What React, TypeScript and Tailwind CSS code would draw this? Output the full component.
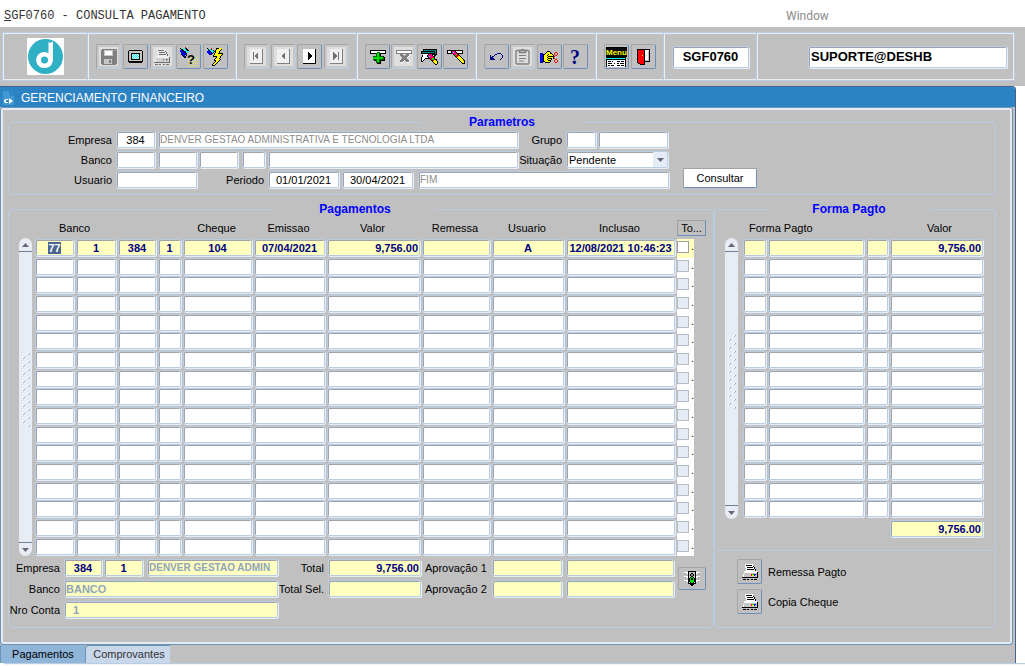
import { useEffect, useRef, type ReactNode } from "react";
import clsx from "clsx";

const FIELD =
  "block h-[17px] min-w-0 rounded-[2px] border border-[#b8cce4] px-px outline-none shadow-[inset_1px_1px_0_#a0a4aa,1px_1px_0_#e8eef6]";

type FieldProps = {
  label: string;
  value?: string;
  id?: string;
  small?: boolean;
  className?: string;
};

function Field({ label, value = "", id, small, className }: FieldProps) {
  return (
    <input
      id={id}
      type="text"
      aria-label={label}
      defaultValue={value}
      className={clsx(FIELD, small ? "text-[10px]" : "text-[11px]", "leading-[15px]", className)}
    />
  );
}

// ---------------------------------------------------------------- icons

const COLORS: Record<string, string> = {
  K: "#000000",
  W: "#ffffff",
  S: "#c6c6c6",
  G: "#808080",
  R: "#ff0000",
  L: "#00e000",
  B: "#0000ff",
  Y: "#ffff00",
  N: "#000080",
  C: "#00ffff",
  M: "#e6007e",
  O: "#808000",
  D: "#006000",
  T: "#008080",
};

function Pixels({ rows, gray }: { rows: string[]; gray?: boolean }) {
  return (
    <svg
      width={rows[0].length}
      height={rows.length}
      shapeRendering="crispEdges"
      aria-hidden="true"
      className={clsx("shrink-0", gray && "opacity-50 grayscale")}
    >
      {rows.flatMap((row, y) =>
        [...row].map((c, x) =>
          c === "." ? null : (
            <rect key={`${x}-${y}`} x={x} y={y} width="1" height="1" fill={COLORS[c]} />
          )
        )
      )}
    </svg>
  );
}

const PRINTER = [
  "...WWWWWWWW.....",
  "...WKKKKKKW.....",
  "...WWWWWWWWK....",
  "...WWKKKKKKWK...",
  "....WWWWWWWWK...",
  "....WKKKKKKKWK..",
  "....WWWWWWWWWK..",
  "..WWWWWWWWWWWWW.",
  "..WWWWWWWWWWWWWK",
  "..SSSSSSSSSSSSSK",
  ".WSSSSSSSRLLBBSK",
  ".WSSSSSSSRYYBSSK",
  ".WSSSSSSSSSSSSSK",
  "KKKKKKKKKKKKKKKK",
  "................",
  ".KKK.KK..KK.KKK.",
];

const SAVE = [
  ".GGGGGGGGGGGGGGG",
  "GGGSSSSSSSSSGGSG",
  "GGGSWWWWWWWSGGGG",
  "GGGSWWWWWWWSGGGG",
  "GGGSWWWWWWWSGGGG",
  "GGGSWWWWWWWSGGGG",
  "GGGSSSSSSSSSGGGG",
  "GGGGGGGGGGGGGGGG",
  "GGGGGGGGGGGGGGGG",
  "GGGGGGGGGGGGGGGG",
  "GGGSSSSSSSSGGGGG",
  "GGGSSSSSGGSGGGGG",
  "GGGSSSSSGGSGGGGG",
  "GGGSSSSSGGSGGGGG",
  "GGGSSSSSSSSGGGGG",
  ".GGGGGGGGGGGGGG.",
];

const SCREEN = [
  ".KKKKKKKKKKKKK.",
  "KSSSSSSSSSSSSSK",
  "KSSSSSSSSSSSSSK",
  "KSSKKKKKKKKKSSK",
  "KSSKCWCWCWCKSSK",
  "KSSKWCWCWCWKSSK",
  "KSSKCWCWCWCKSSK",
  "KSSKWCWCWCWKSSK",
  "KSSKCWCWCWCKSSK",
  "KSSKKKKKKKKKSSK",
  "KSSSSSSSSSSSSSK",
  "KKKKKKKKKKKKKKK",
  ".KKKKKKKKKKKKK.",
];

const BOLT = [
  "K...R....KKKYYY..",
  ".KCCK....KYYYYK..",
  ".BKCCCK.KYYYYK...",
  "BBBKCCCKKYYYK....",
  "BBBBKCK.KYYYK....",
  ".BBBBK.KYYYKKKKK.",
  "..BBK..KYYYYYYYK.",
  "......KYYYYYYYK..",
  "......KKKKYYYK...",
  ".........KYYYK...",
  "........KYYYK....",
  ".......KYYYYYK...",
  ".......KKYYYK....",
  "........KYYK.....",
  ".......KYYK......",
  "......KYYK.......",
  ".....KYYK........",
  ".....KKK.........",
];

const ADD = [
  "KKKKKKKKKKKKKKKK",
  "KWWWWWWWWWWWWWWK",
  "KWWWWWWDDDWWWWWK",
  "KKKKKKDLLDKKKKKK",
  "......DLLDK.....",
  "......DLLDK.....",
  "...DDDDLLDDDDK..",
  "...LLLLLLLLLLDK.",
  "...LLLLLLLLLLDK.",
  "...DDDDLLDDDDDK.",
  "....KKDLLDKKKKK.",
  "......DLLDK.....",
  "......DDDDK.....",
  ".......KKKK.....",
];

const REMOVE = [
  "GGGGGGGGGGGGGGGG",
  "GWWWWWWWWWWWWWWG",
  "GWWWWWWWWWWWWWWG",
  "GGGGGGGGGGGGGGGG",
  "....GGG...GGG...",
  "....GGGG.GGGGW..",
  ".....GGGGGGGW...",
  "......GGGGGW....",
  "......GGGGG.....",
  ".....GGGGGGG....",
  "....GGGGWGGGG...",
  "....GGGW..GGGW..",
  ".....WW....WW...",
];

const CLEAR_FORM = [
  "..KKKKKKKKKKKKKK.",
  "..KTTTTTTTTTTTTK.",
  "KKKKKKKKKKKKKKTK.",
  "KTTTTTTTTTTTTKTK.",
  "KKKKKKKKKKKKKKTK.",
  "..WWWWWKMMMKKKKK.",
  ".KWWWWKMMMMKWKK..",
  ".KWWWWKMCMMMKK...",
  "KWWWWWWKMMMRRK...",
  "KWWWKKKKKMRLLK...",
  "KWWK.....KRLLRKK.",
  "KWK.......KKRYYK.",
  "KK.........KYYYYK",
  "............KYYYK",
  ".............KYYK",
  "..............KK.",
];

const CLEAR_RECORD = [
  "KKKKKKKKKKKKKKKK..",
  "KWWWKMMMKWWWWWWK..",
  "KWWWKMCMMKWWWWWK..",
  "KKKKKMMMMMKKKKKK..",
  "......KMMLRK......",
  ".......KLRRRK.....",
  "........KRRYYK....",
  ".........KYYYYK...",
  "..........KYYYYK..",
  "...........KYYYYK.",
  "............KYYYOK",
  ".............KYYYK",
  "..............KYYK",
  "...............KKK",
];

const UNDO = [
  ".......NNNN..",
  ".....NN....N.",
  "N...N.......N",
  "N.NN........N",
  "NNN.........N",
  "NNNN.......N.",
  "NNNNN.....N..",
];

const HAND = [
  ".......KKK........",
  "......KYYYK....RR.",
  "BBK..KYYYYKK..R..R",
  "BBBKKYYYKYYYK.R..R",
  "BBBKYYYKYYYYYK.RR.",
  "BBBKYYYYKKKKKKR...",
  "BBBKYYYKYYYYYK....",
  "BBBKYYYYKKKK.KR...",
  "BBBKYYYKYYYK...RR.",
  "BBBKYYYYKKK...R..R",
  "BBBKKYYYYYK...R..R",
  "BBK..KKKKK.....RR.",
];

const DOOR = [
  "KKKKKKKKKKKKK",
  "KRRRRRRKWWWWK",
  "KRRRRRRKWWWSK",
  "KRRRRRRKWWWSK",
  "KRRRRRRKWWWSK",
  "KRRRRRRKWWWSK",
  "KRRRRYRKWWWSK",
  "KRRRRRRKWWWSK",
  "KRRRRRRKWWWSK",
  "KRRRRRRKWWWSK",
  "KRRRRRRKWWWSK",
  "KRRRRRRKSSSSK",
  "KRRRRRRKKKKKK",
  "KRRRRRRK.....",
  ".KKRRRRK.....",
  "...KKKKK.....",
];

const TRAFFIC = [
  "....KKKKKKKK....",
  "WWWWKSSSSSSKWWWW",
  ".GWWKSSKKSSKWWG.",
  "....KSKGGKSK....",
  "....KSKGGKSK....",
  "WWWWKSSKKSSKWWWW",
  ".GWWKSKLLKSKWWG.",
  "....KKLKKLKK....",
  "....KKLKKLKK....",
  "WWWWKKLLLLKKWWWW",
  ".GWWKKLLLLKKWWG.",
  "....KSKLLKSK....",
  "....KKKKKKKK....",
  "......KKKK......",
  ".......KK.......",
];

const CLIPBOARD = (
  <svg width="15" height="17" fill="none" stroke="#808080" strokeWidth="1.4" aria-hidden="true">
    <rect x="1" y="2.5" width="13" height="13.5" rx="1" />
    <path d="M4.5 4.5V2.5h2a1 1 0 0 1 2 0h2v2z" fill="#e0e0e0" />
    <path d="M4 7.5h7M4 10.5h7M4 13h5" strokeWidth="1" />
  </svg>
);

const QUERY = (
  <svg width="18" height="20" shapeRendering="crispEdges" aria-hidden="true">
    <path d="M0 3l1 4 4 3 2-6z" fill="#0000ff" />
    <path d="M2 1l5 5 3-2-4-3z" fill="#00ffff" />
    <path d="M0 1l7 6M5 1l4 3M1 7l4 4 2-4" stroke="#000000" fill="none" />
    <rect x="5" y="0" width="1" height="2" fill="#ff0000" />
    <path
      d="M8 10.5h10M9 12.5h9M8 14.5h10M9 16.5h9M8 18.5h10"
      stroke="#f0e850"
      strokeDasharray="1 1"
    />
    <text x="7" y="17" className="font-['Liberation_Sans'] text-[13px] font-bold">
      ?
    </text>
  </svg>
);

const HELP = (
  <svg width="14" height="20" aria-hidden="true">
    <text
      x="2"
      y="17"
      fill="#000080"
      className="font-['Liberation_Serif'] text-[20px] font-bold"
    >
      ?
    </text>
  </svg>
);

const MENU = (
  <svg width="21" height="20" shapeRendering="crispEdges" aria-hidden="true">
    <rect width="21" height="10" fill="#000000" />
    <text x="0" y="8" fill="#ffff00" className="font-['Liberation_Sans'] text-[8px] font-bold">
      Menu
    </text>
    <rect y="10" width="20" height="10" fill="#000000" />
    <rect y="11" width="19" height="1" fill="#00ffff" />
    <rect x="1" y="13" width="18" height="7" fill="#ffffff" />
    <path
      d="M2 14.5h3m1 0h1m4 0h3m1 0h3M2 16.5h4m2 0h1m2 0h2m1 0h4M2 18.5h2m1 0h3m3 0h3m1 0h3"
      stroke="#000000"
    />
  </svg>
);

function NavIcon({ d, off }: { d: string; off?: boolean }) {
  return (
    <svg width="13" height="15" shapeRendering="crispEdges" aria-hidden="true">
      <rect width="12" height="14" fill={off ? "#f0f0f0" : "#ffffff"} />
      <path d="M0 14.5h13M12.5 0v15" stroke={off ? "#808080" : "#000000"} />
      <path d={d} fill={off ? "#707070" : "#000000"} />
    </svg>
  );
}

function Logo() {
  return (
    <svg width="37" height="37" viewBox="0 0 37 37" role="img" aria-label="Denver">
      <rect width="37" height="37" fill="#ffffff" />
      <circle cx="18.500" cy="18.500" r="17.500" fill="#2fb0c4" />
      <path d="M21 4c2 1 4 1 5-1v18c0 5-3 9-8 9a8 8 0 1 1 3-15z" fill="#ffffff" />
      <circle cx="17.500" cy="22" r="3.500" fill="#2fb0c4" />
      <path d="M21 4v11" stroke="#2fb0c4" strokeWidth="1" fill="none" />
    </svg>
  );
}

// -------------------------------------------------------------- toolbar

function ToolButton({
  label,
  off,
  children,
}: {
  label: string;
  off?: boolean;
  children: ReactNode;
}) {
  return (
    <button
      type="button"
      aria-label={label}
      disabled={off}
      className={clsx(
        "flex h-[25px] w-[25px] items-center justify-center overflow-hidden rounded-[2px] border border-t-[#a4a4a4] border-l-[#a4a4a4]",
        off
          ? "border-r-[#b8cce4] border-b-[#b8cce4] bg-[#dedede] shadow-[inset_0_0_0_2px_#c8c8c8]"
          : "border-r-[#6b8fb5] border-b-[#6b8fb5]"
      )}
    >
      {children}
    </button>
  );
}

function Group({ className, children }: { className: string; children: ReactNode }) {
  return (
    <div
      className={clsx(
        "flex items-center justify-between border-l border-[#b8cce4] pr-[7px] pl-2 shadow-[inset_1px_0_0_#e8eef6]",
        className
      )}
    >
      {children}
    </div>
  );
}

function Toolbar() {
  return (
    <div className="bg-[#c0c0c0] pt-[5px] pr-[10px] pb-[5px] pl-[2px]">
      <div className="flex h-[49px] border border-[#b8cce4] shadow-[inset_1px_1px_0_#e8eef6,inset_-1px_-1px_0_#e8eef6]">
        <div className="flex w-[84px] shrink-0 items-center justify-center">
          <Logo />
        </div>
        <Group className="w-[148px] shrink-0">
          <ToolButton label="Salvar" off>
            <Pixels rows={SAVE} />
          </ToolButton>
          <ToolButton label="Tela">
            <Pixels rows={SCREEN} />
          </ToolButton>
          <ToolButton label="Imprimir" off>
            <Pixels rows={PRINTER} gray />
          </ToolButton>
          <ToolButton label="Entrar consulta">{QUERY}</ToolButton>
          <ToolButton label="Executar consulta">
            <Pixels rows={BOLT} />
          </ToolButton>
        </Group>
        <Group className="w-[121px] shrink-0">
          <ToolButton label="Primeiro" off>
            <NavIcon off d="M3 3h1v8h-1zM8 3v8L5 7z" />
          </ToolButton>
          <ToolButton label="Anterior" off>
            <NavIcon off d="M8 3v8L4 7z" />
          </ToolButton>
          <ToolButton label="Proximo">
            <NavIcon d="M5 3v8l4-4z" />
          </ToolButton>
          <ToolButton label="Ultimo" off>
            <NavIcon off d="M3 3v8l4-4zM8 3h1v8h-1z" />
          </ToolButton>
        </Group>
        <Group className="w-[119px] shrink-0">
          <ToolButton label="Incluir">
            <Pixels rows={ADD} />
          </ToolButton>
          <ToolButton label="Remover" off>
            <Pixels rows={REMOVE} />
          </ToolButton>
          <ToolButton label="Limpar tela">
            <Pixels rows={CLEAR_FORM} />
          </ToolButton>
          <ToolButton label="Limpar registro">
            <Pixels rows={CLEAR_RECORD} />
          </ToolButton>
        </Group>
        <Group className="w-[120px] shrink-0">
          <ToolButton label="Desfazer">
            <Pixels rows={UNDO} />
          </ToolButton>
          <ToolButton label="Lista" off>
            {CLIPBOARD}
          </ToolButton>
          <ToolButton label="Recortar">
            <Pixels rows={HAND} />
          </ToolButton>
          <ToolButton label="Ajuda">{HELP}</ToolButton>
        </Group>
        <Group className="w-[68px] shrink-0">
          <ToolButton label="Menu">{MENU}</ToolButton>
          <ToolButton label="Sair">
            <Pixels rows={DOOR} />
          </ToolButton>
        </Group>
        <Group className="w-[93px] shrink-0">
          <input
            type="text"
            aria-label="Programa"
            defaultValue="SGF0760"
            className="h-[22px] w-full rounded-[2px] border border-[#b8cce4] bg-white text-center text-[13px] font-bold shadow-[inset_1px_1px_0_#a0a4aa,1px_1px_0_#e8eef6]"
          />
        </Group>
        <Group className="flex-1">
          <input
            type="text"
            aria-label="Conexao"
            defaultValue="SUPORTE@DESHB"
            className="ml-auto h-[22px] w-[199px] rounded-[2px] border border-[#b8cce4] bg-white px-[2px] text-[13px] font-bold shadow-[inset_1px_1px_0_#a0a4aa,1px_1px_0_#e8eef6]"
          />
        </Group>
      </div>
    </div>
  );
}

// --------------------------------------------------------------- panels

function ScrollBar() {
  return (
    <div className="flex w-[13px] shrink-0 flex-col justify-between rounded-t-full rounded-b-full bg-[#e8edf5]">
      <button
        type="button"
        aria-label="Subir"
        className="flex h-[14px] items-center justify-center border-b border-[#6f7f96]"
      >
        <svg width="7" height="4" aria-hidden="true">
          <path d="M0 4l3.500-4L7 4z" fill="#66667a" />
        </svg>
      </button>
      <svg width="13" height="76" className="mb-3" shapeRendering="crispEdges" aria-hidden="true">
        {Array.from({ length: 19 }, (_, i) => (
          <g key={i} transform={`translate(${i % 2 ? 3 : 8} ${i * 4})`}>
            <path d="M0 0h2v1h-1v1h-1z" fill="#ffffff" />
            <path d="M2 0h1v1h-1zM1 1h1v1h-1z" fill="#8fa5c0" />
          </g>
        ))}
      </svg>
      <button
        type="button"
        aria-label="Descer"
        className="flex h-[14px] items-center justify-center border-t border-[#6f7f96]"
      >
        <svg width="7" height="4" aria-hidden="true">
          <path d="M0 0l3.500 4L7 0z" fill="#66667a" />
        </svg>
      </button>
    </div>
  );
}

const ROW = "h-[19px] [&:nth-child(3n+2)]:h-[18px]";
const YELLOW = "bg-[#ffffc0] font-bold text-[#000080]";

function Parametros() {
  return (
    <fieldset className="min-w-0 rounded-[4px] border border-[#b8cce4] pb-[5px]">
      <legend className="mx-auto w-[162px] text-center text-[12px] leading-4 font-bold text-[#0000ff]">
        Parametros
      </legend>
      <div className="flex items-end gap-[14px] pt-px">
        <div className="grid gap-[2px] text-[11px]">
          <div className="flex h-[18px]">
            <label htmlFor="empresa" className="mr-1 w-[103px] text-right leading-[18px]">
              Empresa
            </label>
            <Field id="empresa" label="Empresa" value="384" className="mr-[3px] w-[39px] bg-white text-center" />
            <Field
              label="Nome da empresa"
              value="DENVER GESTAO ADMINISTRATIVA E TECNOLOGIA LTDA"
              small
              className="w-[360px] bg-white text-[#8c8c8c]"
            />
            <label htmlFor="grupo" className="mr-1 w-[44px] text-right leading-[18px]">
              Grupo
            </label>
            <Field id="grupo" label="Grupo" className="mr-[2px] w-[30px] bg-white" />
            <Field label="Nome do grupo" className="w-[70px] bg-white" />
          </div>
          <div className="flex h-[18px]">
            <label htmlFor="banco" className="mr-1 w-[103px] text-right leading-[18px]">
              Banco
            </label>
            <Field id="banco" label="Banco" className="mr-[3px] w-[39px] bg-white" />
            <Field label="Agencia" className="mr-[2px] w-[39px] bg-white" />
            <Field label="Conta" className="mr-1 w-[39px] bg-white" />
            <Field label="Digito" className="mr-[3px] w-[23px] bg-white" />
            <Field label="Nome do banco" className="w-[250px] bg-white" />
            <label htmlFor="situacao" className="mr-1 w-[44px] text-right leading-[18px]">
              Situação
            </label>
            <div className="relative w-[102px]">
              <select
                id="situacao"
                defaultValue="Pendente"
                className={clsx(FIELD, "w-full appearance-none bg-white pl-[2px] text-[11px] leading-[17px]")}
              >
                <option>Pendente</option>
                <option>Pago</option>
              </select>
              <span className="pointer-events-none absolute top-px right-px flex h-[15px] w-[14px] items-center justify-center bg-[#e6ecf5]">
                <svg width="7" height="4" aria-hidden="true">
                  <path d="M0 0l3.500 4L7 0z" fill="#66667a" />
                </svg>
              </span>
            </div>
          </div>
          <div className="flex h-[18px]">
            <label htmlFor="usuario" className="mr-1 w-[103px] text-right leading-[18px]">
              Usuario
            </label>
            <Field id="usuario" label="Usuario" className="w-[81px] bg-white" />
            <label htmlFor="periodo" className="mr-1 w-[67px] text-right leading-[18px]">
              Periodo
            </label>
            <Field id="periodo" label="Periodo inicial" value="01/01/2021" className="mr-[3px] w-[71px] bg-white text-center" />
            <Field label="Periodo final" value="30/04/2021" className="mr-[5px] w-[71px] bg-white text-center" />
            <Field label="Descricao do periodo" value="FIM" small className="w-[251px] bg-white text-[#8c8c8c]" />
          </div>
        </div>
        <button
          type="button"
          className="mb-px h-[20px] w-[74px] rounded-[2px] border border-t-[#a0a0a0] border-r-[#6b8fb5] border-b-[#6b8fb5] border-l-[#a0a0a0] bg-white text-[11px]"
        >
          Consultar
        </button>
      </div>
    </fieldset>
  );
}

const FIRST_ROW = ["77", "1", "384", "1", "104", "07/04/2021", "9,756.00", "", "A", "12/08/2021 10:46:23"];

const COLUMNS = [
  "Banco",
  "Agencia",
  "Conta",
  "Digito",
  "Cheque",
  "Emissao",
  "Valor",
  "Remessa",
  "Usuario",
  "Inclusao",
];

function Pagamentos() {
  const bodyRef = useRef<HTMLTableSectionElement>(null);

  // the cursor starts in the first record, with its content selected
  useEffect(() => {
    const first = bodyRef.current?.querySelector("input");
    first?.focus();
    first?.select();
  }, []);

  return (
    <fieldset className="w-[706px] min-w-0 shrink-0 rounded-[4px] border border-[#b8cce4] pb-[8px]">
      <legend className="-ml-1.5 w-[162px] text-center text-[12px] leading-4 font-bold text-[#0000ff]">
        Pagamentos
      </legend>
      <div className="flex pl-[10px]">
        <div className="mt-[21px] mr-[3px] flex">
          <ScrollBar />
        </div>
        <table className="w-[671px] table-fixed border-collapse text-[11px]">
          <colgroup>
            <col className="w-[41px]" />
            <col className="w-[42px]" />
            <col className="w-[40px]" />
            <col className="w-[25px]" />
            <col className="w-[71px]" />
            <col className="w-[73px]" />
            <col className="w-[95px]" />
            <col className="w-[70px]" />
            <col className="w-[74px]" />
            <col className="w-[111px]" />
            <col className="w-[17px]" />
            <col className="w-[12px]" />
          </colgroup>
          <thead>
            <tr className="h-[22px]">
              <th colSpan={4} className="pl-6 text-left font-normal">
                Banco
              </th>
              {COLUMNS.slice(4).map((c) => (
                <th key={c} className="pr-[4px] font-normal">
                  {c}
                </th>
              ))}
              <th colSpan={2} className="p-0 font-normal">
                <button
                  type="button"
                  className="block h-[16px] w-full border border-t-[#a0a0a0] border-r-[#6b8fb5] border-b-[#6b8fb5] border-l-[#a0a0a0] leading-[14px]"
                >
                  To...
                </button>
              </th>
            </tr>
          </thead>
          <tbody ref={bodyRef}>
            {Array.from({ length: 17 }, (_, r) => (
              <tr key={r} className={ROW}>
                {COLUMNS.map((c, i) => (
                  <td key={c} className="p-0 pr-[2px] align-top">
                    <Field
                      label={`${c} ${r + 1}`}
                      value={r === 0 ? FIRST_ROW[i] : ""}
                      className={clsx(
                        "w-full selection:bg-[#49658f] selection:text-white",
                        i === 6 ? "text-right" : "text-center",
                        r === 0 ? YELLOW : "bg-white"
                      )}
                    />
                  </td>
                ))}
                <td className={clsx("p-0 align-top", r === 0 ? "bg-[#ffffc0]" : "bg-white")}>
                  <label className="flex h-[15px] items-center gap-[2px] leading-[17px]">
                    <input
                      type="checkbox"
                      aria-label={`Marcar ${r + 1}`}
                      disabled={r > 0}
                      className={clsx(
                        "h-[12px] w-[12px] shrink-0 appearance-none border",
                        r === 0 ? "border-[#a0a0a0] bg-white" : "border-[#b4bcc6] bg-[#e6ecf5]"
                      )}
                    />
                    <span>.</span>
                  </label>
                </td>
                <td className="p-0" />
              </tr>
            ))}
          </tbody>
        </table>
      </div>
      <div className="mt-[3px] grid grid-cols-[51px_214px_42px_93px_63px_70px_108px_28px] gap-x-1 gap-y-[3px] text-[11px] leading-[18px] whitespace-nowrap">
        <label htmlFor="p-empresa" className="justify-self-end">
          Empresa
        </label>
        <div className="flex h-[18px]">
          <Field id="p-empresa" label="Empresa" value="384" className={clsx("mr-[2px] w-[38px] text-center", YELLOW)} />
          <Field label="Filial" value="1" className={clsx("mr-1 w-[39px] text-center", YELLOW)} />
          <Field
            label="Nome"
            value="DENVER GESTAO ADMIN"
            small
            className="flex-1 bg-[#ffffc0] font-bold text-[#8fa5b8]"
          />
        </div>
        <label htmlFor="total" className="justify-self-end">
          Total
        </label>
        <Field id="total" label="Total" value="9,756.00" className={clsx("text-right", YELLOW)} />
        <label htmlFor="aprov1">Aprovação 1</label>
        <Field id="aprov1" label="Aprovador 1" className={YELLOW} />
        <Field label="Data aprovação 1" className={YELLOW} />
        <button
          type="button"
          aria-label="Liberar"
          className="row-span-2 mt-2 flex h-[23px] items-center justify-center rounded-[2px] border border-t-[#a4a4a4] border-r-[#6b8fb5] border-b-[#6b8fb5] border-l-[#a4a4a4]"
        >
          <Pixels rows={TRAFFIC} />
        </button>
        <label htmlFor="p-banco" className="justify-self-end">
          Banco
        </label>
        <Field id="p-banco" label="Banco" value="BANCO" className="bg-[#ffffc0] font-bold text-[#8fa5b8]" />
        <label htmlFor="totalsel" className="justify-self-end">
          Total Sel.
        </label>
        <Field id="totalsel" label="Total selecionado" className={clsx("text-right", YELLOW)} />
        <label htmlFor="aprov2">Aprovação 2</label>
        <Field id="aprov2" label="Aprovador 2" className={YELLOW} />
        <Field label="Data aprovação 2" className={YELLOW} />
        <label htmlFor="conta" className="justify-self-end">
          Nro Conta
        </label>
        <Field id="conta" label="Nro Conta" value=" 1" className="bg-[#ffffc0] pl-[5px] font-bold text-[#8fa5b8]" />
      </div>
    </fieldset>
  );
}

function FormaPagto() {
  return (
    <div className="flex flex-1 flex-col">
      <fieldset className="min-w-0 rounded-t-[4px] border border-b-0 border-[#b8cce4] pb-[13px]">
        <legend className="-ml-1.5 w-[162px] text-center text-[12px] leading-4 font-bold text-[#0000ff]">
          Forma Pagto
        </legend>
        <div className="flex pl-[10px]">
          <div className="mt-[21px] mr-[5px] flex">
            <ScrollBar />
          </div>
          <table className="w-[242px] table-fixed border-collapse text-[11px]">
            <colgroup>
              <col className="w-[25px]" />
              <col className="w-[98px]" />
              <col className="w-[24px]" />
              <col className="w-[95px]" />
            </colgroup>
            <thead>
              <tr className="h-[22px]">
                <th colSpan={3} className="pl-[6px] text-left font-normal">
                  Forma Pagto
                </th>
                <th className="pl-1 font-normal">Valor</th>
              </tr>
            </thead>
            <tbody>
              {Array.from({ length: 15 }, (_, r) => (
                <tr key={r} className={ROW}>
                  {["Codigo", "Forma", "Tipo", "Valor"].map((c, i) => (
                    <td key={c} className="p-0 pr-[2px] align-top">
                      <Field
                        label={`${c} ${r + 1}`}
                        value={r === 0 && i === 3 ? "9,756.00" : ""}
                        className={clsx(
                          "w-full",
                          i === 3 && "text-right",
                          r === 0 ? YELLOW : "bg-white"
                        )}
                      />
                    </td>
                  ))}
                </tr>
              ))}
            </tbody>
          </table>
        </div>
        <Field
          label="Valor total"
          value="9,756.00"
          className={clsx("mt-px ml-[175px] w-[93px] text-right", YELLOW)}
        />
      </fieldset>
      <div className="grid flex-1 content-start gap-[5px] rounded-[4px] border border-[#b8cce4] pt-2 pl-[22px] text-[11px]">
        {["Remessa Pagto", "Copia Cheque"].map((name) => (
          <div key={name} className="flex items-center gap-[6px]">
            <ToolButton label={name}>
              <Pixels rows={PRINTER} />
            </ToolButton>
            <span className="pt-[2px]">{name}</span>
          </div>
        ))}
      </div>
    </div>
  );
}

export default function App() {
  return (
    <div className="min-h-screen bg-white font-['Liberation_Sans',Arial,sans-serif] text-black">
      <header className="flex h-[27px] items-center pt-[4px] pl-1 text-[12px] text-[#333333]">
        <h1 className="w-[782px] font-['Liberation_Mono',monospace]">
          <span className="underline">S</span>GF0760 - CONSULTA PAGAMENTO
        </h1>
        <a href="#window" className="font-[Roboto,sans-serif] text-[#8a8a8a]">
          Window
        </a>
      </header>

      <Toolbar />

      <main className="mr-[9px] rounded-tr-[4px] border-t border-r border-[#45628c] bg-[#c0c0c0]">
        <div className="flex h-[20px] items-center gap-[7px] rounded-tr-[3px] bg-[#2c83c4] pt-[2px] pl-[3px] text-[12px] text-white">
          <svg width="11" height="14" aria-hidden="true">
            <path d="M0 0h7l4 4v10H0z" fill="#4298d3" />
            <path d="M7 0v4h4" stroke="#2373ad" fill="none" />
            <path d="M6 7l4 3-4 3zM5 8H3a2 2 0 0 0 0 4h2M1 10h4" fill="#ffffff" />
            <path d="M3 9h2v2H3z" fill="#2c83c4" />
          </svg>
          <h2>GERENCIAMENTO FINANCEIRO</h2>
        </div>

        <div className="mr-[2px] rounded-[3px] border border-[#6f93b5] pt-[6px] pr-[16px] pb-4 pl-[7px] shadow-[inset_0_0_0_2px_#e4ebf4]">
          <Parametros />
          <div className="mt-[6px] flex">
            <Pagamentos />
            <FormaPagto />
          </div>
        </div>

        <nav className="flex h-[18px] text-[11px]">
          <button type="button" className="w-[85px] border-l border-[#6f93b5] bg-[#8fb5d8]">
            Pagamentos
          </button>
          <button
            type="button"
            className="w-[85px] rounded-tl-[4px] border-t border-l border-[#6f93b5] bg-[#c9d7ea] pl-[2px] text-[#333333]"
          >
            Comprovantes
          </button>
        </nav>
      </main>
      <div className="ml-1 h-[2px] border-t border-[#b8cce4] bg-[#eef3f9]" />
    </div>
  );
}
